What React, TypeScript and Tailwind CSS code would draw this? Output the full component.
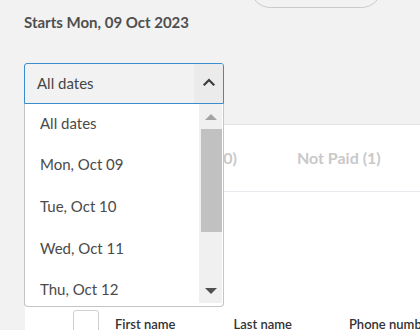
const dates = ['All dates', 'Mon, Oct 09', 'Tue, Oct 10', 'Wed, Oct 11', 'Thu, Oct 12', 'Fri, Oct 13']

function Chevron() {
  return (
    <svg width="12" height="8" viewBox="0 0 12 8" fill="none">
      <path d="M1.5 6.5 L6 2 L10.5 6.5" stroke="#3d3d3d" strokeWidth="2.2" strokeLinecap="square" />
    </svg>
  )
}

function DateList() {
  return (
    <div className="absolute left-0 top-full z-10 flex h-[203px] w-full overflow-hidden rounded-b-[4px] border border-t-0 border-[#c4c4c4] bg-white">
      <div className="-mt-[2px] flex-1 overflow-hidden">
        {dates.map((d) => (
          <div key={d} className="flex h-[41.7px] items-center pl-[15px] text-[15px] text-[#4a4a4a]">
            {d}
          </div>
        ))}
      </div>
      {/* fake scrollbar */}
      <div className="mb-[3px] mr-[1px] flex w-[23px] flex-col bg-[#f0f0f0]">
        <div className="flex h-[25px] items-center justify-center">
          <div className="h-0 w-0 border-x-[6px] border-b-[6px] border-x-transparent border-b-[#a3a3a3]" />
        </div>
        <div className="ml-[2px] h-[103px] bg-[#c1c1c1]" />
        <div className="flex-1" />
        <div className="flex h-[25px] items-center justify-center">
          <div className="h-0 w-0 border-x-[6px] border-t-[6px] border-x-transparent border-t-[#505050]" />
        </div>
      </div>
    </div>
  )
}

export default function App() {
  return (
    <div className="h-[330px] w-[420px] overflow-hidden bg-[#f2f2f2] font-['Lato',sans-serif]">
      <div className="flex pl-[250px]">
        <div className="-mt-[33px] h-[41px] w-[132px] rounded-full border border-[#cacaca]" />
      </div>

      <div className="ml-[24px] mt-[4px] text-[15px] font-bold leading-[20px] text-[#4f4f4f]">Starts Mon, 09 Oct 2023</div>

      <div className="relative ml-[24px] mt-[31px] w-[200px]">
        <div className="flex h-[41px] overflow-hidden rounded-t-[3px] border border-[#3a8dcc]">
          <div className="flex flex-1 items-center pl-[12px] text-[15px] text-[#454545]">All dates</div>
          <div className="flex w-[29px] items-center justify-center bg-[#ebebeb] pb-[4px]">
            <Chevron />
          </div>
        </div>
        <DateList />
      </div>

      <div className="ml-[25px] mt-[20px] border-t border-[#e4e4e4] bg-white">
        <div className="flex h-[67px] items-center gap-[60px] whitespace-nowrap border-b border-[#e6e9ee] pl-[159px] text-[16px] font-bold text-[#c9c9c9]">
          <span>Paid (0)</span>
          <span>Not Paid (1)</span>
        </div>
        <div className="h-[118px]" />
        <div className="flex items-start whitespace-nowrap text-[13px] font-semibold text-[#333]">
          <div className="ml-[48px] h-[25px] w-[26px] shrink-0 rounded-[3px] border border-[#cfcfcf]" />
          <span className="ml-[16px] mt-[5px] shrink-0">First name</span>
          <span className="ml-[58px] mt-[5px] shrink-0">Last name</span>
          <span className="ml-[57px] mt-[5px] shrink-0">Phone number</span>
        </div>
      </div>
    </div>
  )
}
